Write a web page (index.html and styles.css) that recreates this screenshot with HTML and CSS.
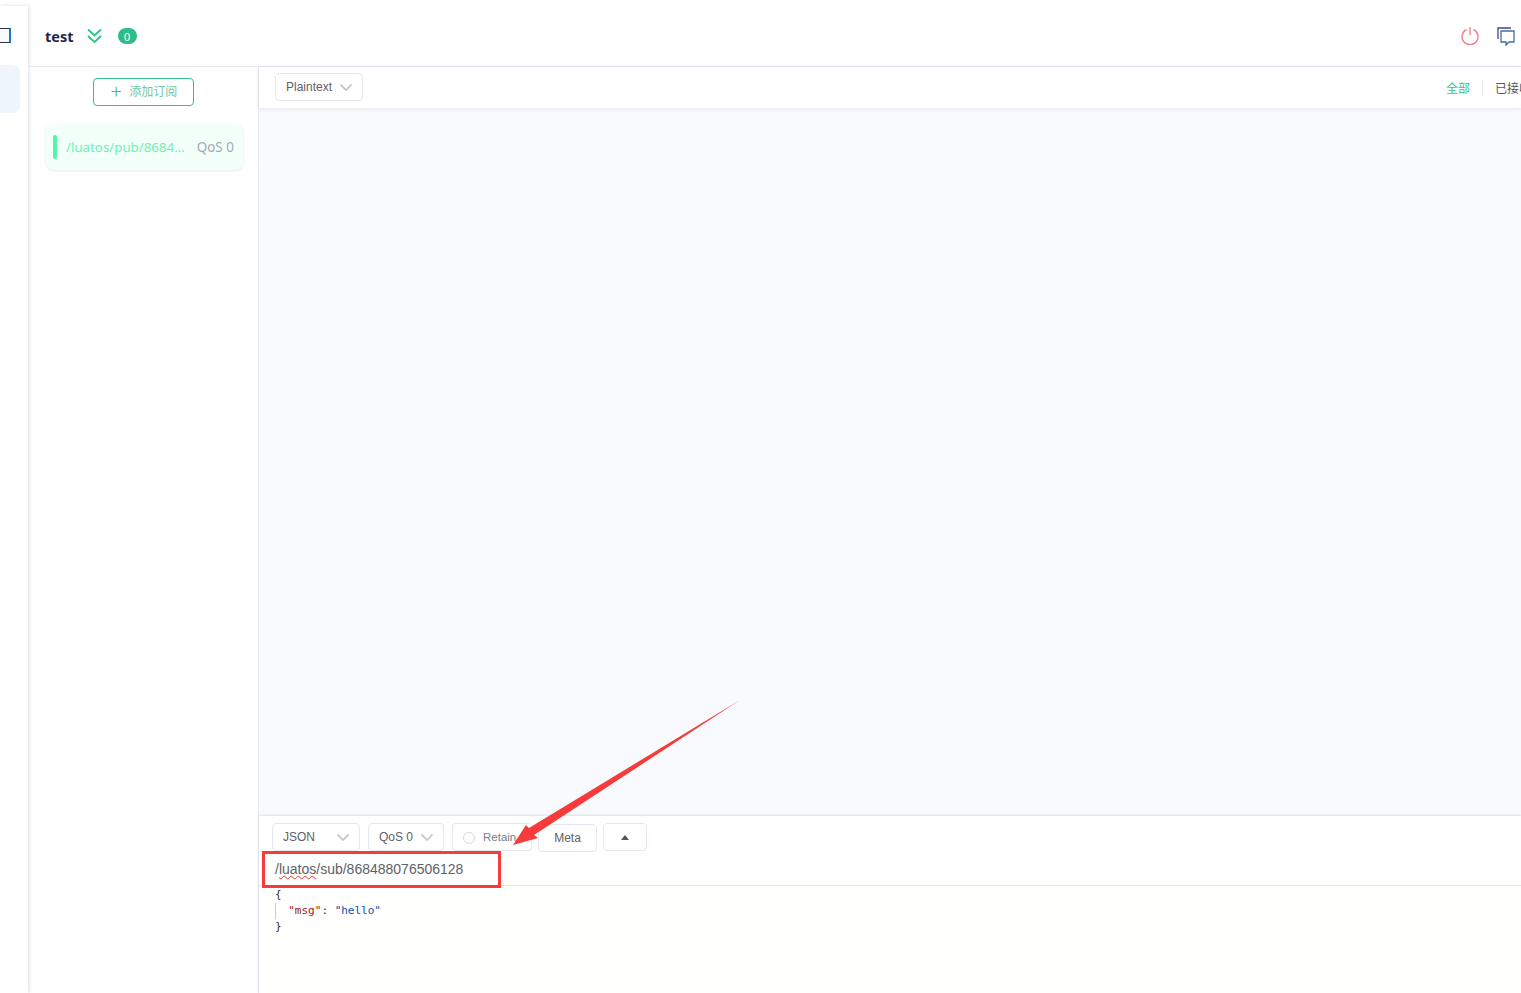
FILE: index.html
```html
<!DOCTYPE html>
<html>
<head>
    <meta charset="UTF-8">
    <title>MQTTX</title>
    <link rel="stylesheet" href="styles.css">
</head>
<body>
    <!-- 左侧导航 -->
    <aside class="rail">
        <span class="rail-icon"></span>
        <span class="rail-active"></span>
    </aside>

    <div class="main">
        <!-- 顶部 -->
        <header class="top-bar">
            <span class="conn-name">test</span>
            <svg class="conn-arrows" width="15" height="16" viewBox="0 0 15 16" fill="none" stroke="#34c388" stroke-width="2">
                <path d="M1 1.500 7.500 7.500 14 1.500"/>
                <path d="M1 8l6.500 6L14 8"/>
            </svg>
            <span class="conn-count">0</span>
            <span class="top-actions">
                <svg width="18" height="19" viewBox="0 0 18 19" fill="none" stroke="#f4828c" stroke-width="1.400">
                    <path d="M5.500 3.500a8 8 0 1 0 7 0"/>
                    <path d="M9 1v8"/>
                </svg>
                <svg width="20" height="20" viewBox="0 0 20 20" fill="none" stroke-width="1.300">
                    <path d="M2 13V2h13" stroke="#46408a"/>
                    <path d="M5 5h13v11h-5l-3 3v-3H5z" stroke="#3f6f9c"/>
                </svg>
            </span>
        </header>

        <div class="body-row">
            <!-- 订阅列表 -->
            <section class="subs">
                <button class="add-sub"><span class="plus">+</span>添加订阅</button>
                <div class="sub-item">
                    <span class="sub-mark"></span>
                    <span class="sub-topic">/luatos/pub/8684...</span>
                    <span class="sub-qos">QoS 0</span>
                </div>
            </section>

            <!-- 消息区 -->
            <section class="msgs">
                <div class="msgs-bar">
                    <span class="select select-plain">Plaintext<svg class="chev" width="12" height="7" viewBox="0 0 12 7"><path d="M.5.500 6 6l5.500-5.500"/></svg></span>
                    <span class="filter">
                        <span class="filter-on">全部</span>
                        <span class="filter-sep"></span>
                        <span class="filter-off">已接收</span>
                    </span>
                </div>
                <div class="msgs-list"></div>

                <div class="publish">
                    <div class="pub-tools">
                        <span class="select select-json">JSON<svg class="chev" width="12" height="7" viewBox="0 0 12 7"><path d="M.5.500 6 6l5.500-5.500"/></svg></span>
                        <span class="select select-qos">QoS 0<svg class="chev" width="12" height="7" viewBox="0 0 12 7"><path d="M.5.500 6 6l5.500-5.500"/></svg></span>
                        <span class="select select-retain"><i class="radio"></i>Retain</span>
                        <span class="select select-meta">Meta</span>
                        <span class="select select-up"><i class="tri"></i></span>
                    </div>
                    <div class="pub-topic">/<span class="typo">luatos</span>/sub/868488076506128</div>
                    <pre class="pub-code"><span class="guide"></span><span class="c-brace">{</span>
  <span class="c-key">"msg"</span>: <span class="c-str">"hello"</span>
<span class="c-brace">}</span></pre>
                </div>
            </section>
        </div>
    </div>

    <!-- 标注 -->
    <div class="mark-box"></div>
    <svg class="mark-arrow" width="242" height="160" viewBox="0 0 242 160">
        <path d="M240 1 34 136l4 3-25 7 13-20 3 3z" fill="#f73a3a"/>
    </svg>
</body>
</html>
```

FILE: styles.css
```css
html, body {
    height: 100%;
}

body {
    margin: 0;
    display: flex;
    height: 993px;
    overflow: hidden;
    background: #fff;
    font-family: "Liberation Sans", "Noto Sans CJK SC", sans-serif;
    color: #5f6368;
}

/* 左侧导航 */
.rail {
    width: 28px;
    flex: none;
    margin-top: 6px;
    padding-top: 22px;
    box-sizing: border-box;
    display: flex;
    flex-direction: column;
    align-items: flex-start;
    box-shadow: 1px 0 4px rgba(40, 40, 90, 0.16);
}

.rail-icon {
    width: 11px;
    height: 15px;
    box-sizing: border-box;
    background: #fafafa;
    border: 1px solid #2a3350;
    border-width: 1px 2px 1px 0;
    border-right-color: #1e78c8;
}

.rail-active {
    width: 20px;
    height: 48px;
    margin-top: 22px;
    background: #eef6fb;
    border-radius: 0 8px 8px 0;
}

.main {
    flex: 1;
    min-width: 0;
    display: flex;
    flex-direction: column;
    margin-left: 1px;
}

/* 顶部 */
.top-bar {
    height: 61px;
    margin-top: 6px;
    flex: none;
    box-sizing: border-box;
    border-bottom: 1px solid #e6e6f0;
    display: flex;
    align-items: center;
    padding: 0 5px 0 16px;
}

.conn-name {
    font-family: "Noto Sans", sans-serif;
    font-size: 14.500px;
    font-weight: 700;
    color: #1f2544;
}

.conn-arrows {
    margin-left: 13px;
}

.conn-count {
    margin-left: 16px;
    width: 19px;
    height: 16px;
    border-radius: 8px;
    background: #2fbd85;
    color: #fff;
    font-size: 11px;
    line-height: 18px;
    text-align: center;
}

.top-actions {
    margin-left: auto;
    display: flex;
    gap: 17px;
}

.body-row {
    flex: 1;
    min-height: 0;
    display: flex;
}

/* 订阅列表 */
.subs {
    width: 230px;
    flex: none;
    box-sizing: border-box;
    border-right: 1px solid #e6e6f0;
    padding: 11px 15px 0 16px;
    display: flex;
    flex-direction: column;
    align-items: flex-start;
}

.add-sub {
    width: 101px;
    height: 28px;
    margin-left: 48px;
    padding: 0 0 3px 1px;
    background: #fff;
    border: 1px solid #34c388;
    border-radius: 4px;
    color: #72c79f;
    font-family: "Noto Sans CJK SC", sans-serif;
    font-size: 12px;
    display: flex;
    align-items: center;
    justify-content: center;
}

.plus {
    font-size: 20px;
    font-weight: 300;
    line-height: 1;
    margin-right: 8px;
    color: #48b98a;
}

.sub-item {
    width: 197px;
    height: 46px;
    margin: 18px 0 0 1px;
    box-sizing: border-box;
    padding: 0 9px 0 7px;
    background: #f3fff9;
    border-radius: 8px;
    box-shadow: 0 1px 3px rgba(40, 40, 90, 0.1);
    display: flex;
    align-items: center;
    font-family: "Noto Sans", sans-serif;
    font-size: 13.500px;
}

.sub-mark {
    width: 4px;
    height: 24px;
    border-radius: 2px;
    background: #52f5a9;
    flex: none;
}

.sub-topic {
    margin-left: 9px;
    font-size: 13.300px;
    color: #6ff0b2;
    white-space: nowrap;
}

.sub-qos {
    margin-left: auto;
    color: #a3a8b5;
    white-space: nowrap;
}

/* 消息区 */
.msgs {
    flex: 1;
    min-width: 0;
    display: flex;
    flex-direction: column;
}

.msgs-bar {
    height: 41px;
    flex: none;
    box-sizing: border-box;
    padding: 6px 0 0 16px;
    display: flex;
    align-items: flex-start;
    box-shadow: 0 1px 4px rgba(40, 40, 90, 0.1);
    position: relative;
}

.select {
    box-sizing: border-box;
    height: 28px;
    display: inline-flex;
    align-items: center;
    background: #fff;
    border: 1px solid #e6e6f0;
    border-radius: 4px;
    font-size: 12px;
    color: #606266;
}

.chev {
    margin-left: auto;
    fill: none;
    stroke: #c0c4cc;
    stroke-width: 1.700;
}

.select-plain {
    width: 88px;
    padding: 0 10px;
}

.filter {
    margin-left: auto;
    margin-top: 6px;
    display: flex;
    align-items: center;
    width: 75px;
    overflow: hidden;
    white-space: nowrap;
    font-family: "Noto Sans CJK SC", sans-serif;
    font-size: 12px;
}

.filter-on {
    color: #34c388;
}

.filter-sep {
    width: 1px;
    height: 16px;
    margin: 0 12px;
    background: #e6e6f0;
    flex: none;
}

.filter-off {
    color: #555;
}

.msgs-list {
    flex: 1;
    min-height: 0;
    background: #f9fafd;
}

/* 发布 */
.publish {
    height: 177px;
    flex: none;
    box-sizing: border-box;
    background: #fff;
    box-shadow: 0 -1px 2px rgba(40, 40, 90, 0.12);
    position: relative;
}

.pub-tools {
    height: 28px;
    padding: 7px 0 0 13px;
    display: flex;
    align-items: flex-start;
    gap: 8px;
}

.select-json {
    width: 88px;
    padding: 0 10px;
}

.select-qos {
    width: 76px;
    padding: 0 10px;
}

.select-retain {
    width: 80px;
    padding-left: 10px;
    font-size: 11.500px;
    color: #7d8088;
}

.radio {
    width: 10px;
    height: 10px;
    margin: 2px 8px 0 0;
    border: 1px solid #d5d8df;
    border-radius: 50%;
    flex: none;
}

.select-meta {
    width: 59px;
    margin: 1px 0 0 -2px;
    justify-content: center;
}

.select-up {
    width: 44px;
    margin-left: -2px;
    justify-content: center;
}

.tri {
    width: 0;
    height: 0;
    border-left: 4px solid transparent;
    border-right: 4px solid transparent;
    border-bottom: 5px solid #555;
}

.pub-topic {
    height: 35px;
    padding: 9px 0 0 16px;
    box-sizing: border-box;
    border-bottom: 1px solid #e6e6f0;
    font-size: 14px;
    line-height: 18px;
    color: #606266;
}

.typo {
    text-decoration: underline wavy #e53935 1px;
    text-underline-offset: 1px;
}

.pub-code {
    position: relative;
    margin: 0;
    padding: 1px 0 0 16px;
    background: #fffffd;
    height: 107px;
    font-family: "DejaVu Sans Mono", monospace;
    font-size: 11px;
    line-height: 16px;
    color: #333;
}

.guide {
    position: absolute;
    left: 16px;
    top: 17px;
    height: 16px;
    width: 1px;
    background: #ccc;
}

.c-brace {
    color: #333;
}

.c-key {
    color: #a31515;
}

.c-str {
    color: #0451a5;
}

/* 标注 */
.mark-box {
    position: absolute;
    left: 262px;
    top: 851px;
    width: 239px;
    height: 37px;
    box-sizing: border-box;
    border: 3px solid #f73a3a;
}

.mark-arrow {
    position: absolute;
    left: 500px;
    top: 699px;
}
```
